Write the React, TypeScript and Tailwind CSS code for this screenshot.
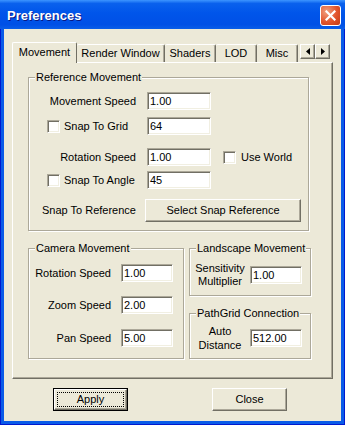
import type { ReactNode } from "react";

const sunken =
  "bg-white border border-[#aca899] border-r-white border-b-white shadow-[inset_1px_1px_0_#716f64,inset_-1px_-1px_0_#f1efe2]";
const raised =
  "bg-[#ece9d8] border border-white border-r-[#716f64] border-b-[#716f64] shadow-[inset_-1px_-1px_0_#aca899]";

const Edit = ({ value, w = "w-[64px]" }: { value: string; w?: string }) => (
  <div className={`${sunken} ${w} h-[18px] pl-[2px] leading-[16px]`}>{value}</div>
);

const Check = () => <div className={`${sunken} w-[13px] h-[13px] shrink-0`} />;

const Group = ({
  title,
  className,
  children,
}: {
  title: string;
  className: string;
  children: ReactNode;
}) => (
  <div
    className={`relative border border-[#aca899] shadow-[inset_1px_1px_0_#fff,1px_1px_0_#fff] ${className}`}
  >
    <span className="absolute -top-[7px] left-[6px] bg-[#ece9d8] px-[1px] leading-[13px] whitespace-nowrap">
      {title}
    </span>
    {children}
  </div>
);

const tabs = [
  { name: "Render Window", w: "w-[88px]" },
  { name: "Shaders", w: "w-[51px]" },
  { name: "LOD", w: "w-[41px]" },
  { name: "Misc", w: "w-[41px]" },
];

const Arrow = ({ dir }: { dir: "left" | "right" }) => (
  <div className={`${raised} w-[15px] h-[15px] flex items-center justify-center`}>
    <svg width="4" height="7" viewBox="0 0 4 7">
      {dir === "left" ? (
        <polygon points="4,0 4,7 0,3.5" fill="#000" />
      ) : (
        <polygon points="0,0 0,7 4,3.5" fill="#000" />
      )}
    </svg>
  </div>
);

export default function App() {
  return (
    <div className="w-[345px] h-[425px] flex flex-col bg-[#0a5be8] px-[4px] pb-[4px] shadow-[inset_1px_0_0_#0019cf,inset_-1px_0_0_#0019cf,inset_0_-1px_0_#0019cf] font-['Liberation_Sans',Arial,sans-serif] text-[11px] text-black select-none">
      {/* title bar */}
      <div className="-mx-[4px] h-[29px] pt-[2px] pl-[7px] pr-[4px] flex items-center justify-between bg-[linear-gradient(180deg,#3d95ff_0%,#0a61ed_12%,#0055ea_45%,#0050e6_85%,#0a5ee8_100%)]">
        <span className="text-white font-bold text-[13px] [text-shadow:1px_1px_0_#0a1883]">
          Preferences
        </span>
        <div className="w-[21px] h-[21px] rounded-[3px] border border-white bg-[radial-gradient(circle_at_30%_30%,#f0a080_0%,#e2542c_55%,#c23a14_100%)] flex items-center justify-center">
          <svg width="11" height="11" viewBox="0 0 11 11">
            <path d="M1.5 1.5 L9.5 9.5 M9.5 1.5 L1.5 9.5" stroke="#fff" strokeWidth="2.2" strokeLinecap="square" />
          </svg>
        </div>
      </div>

      {/* client area */}
      <div className="flex-1 bg-[#ece9d8] pl-[8px] pt-[13px] flex flex-col">
        {/* tab strip */}
        <div className="relative w-[321px] h-[20px] flex items-end">
          <div className="relative z-10 -mb-[1px] w-[65px] h-[21px] bg-[#ece9d8] border-l border-t border-white border-r border-r-[#716f64] rounded-t-[2px] flex items-center justify-center pb-[2px]">
            Movement
          </div>
          {tabs.map((t) => (
            <div
              key={t.name}
              className={`${t.w} h-[18px] bg-[#ece9d8] border-t border-white border-r border-r-[#716f64] shadow-[inset_-1px_0_0_#aca899] rounded-t-[2px] flex items-center justify-center whitespace-nowrap overflow-hidden`}
            >
              {t.name}
            </div>
          ))}
          <div className="absolute top-[2px] right-[3px] flex">
            <Arrow dir="left" />
            <Arrow dir="right" />
          </div>
        </div>

        {/* tab panel */}
        <div className="w-[321px] h-[317px] border border-white border-r-[#716f64] border-b-[#716f64] shadow-[inset_-1px_-1px_0_#aca899] pl-[15px] pt-[14px]">
          <Group title="Reference Movement" className="w-[281px] pb-[8px]">
            <div className="mt-[14px] h-[18px] flex items-center">
              <div className="w-[118px] pr-[11px] text-right">Movement Speed</div>
              <Edit value="1.00" />
            </div>
            <div className="mt-[7px] h-[18px] flex items-center">
              <div className="w-[118px] pl-[18px] flex items-center">
                <Check />
                <span className="ml-[4px]">Snap To Grid</span>
              </div>
              <Edit value="64" />
            </div>
            <div className="mt-[13px] h-[18px] flex items-center">
              <div className="w-[118px] pr-[11px] text-right">Rotation Speed</div>
              <Edit value="1.00" />
              <div className="ml-[12px] flex items-center">
                <Check />
                <span className="ml-[5px]">Use World</span>
              </div>
            </div>
            <div className="mt-[5px] h-[18px] flex items-center">
              <div className="w-[118px] pl-[18px] flex items-center">
                <Check />
                <span className="ml-[4px]">Snap To Angle</span>
              </div>
              <Edit value="45" />
            </div>
            <div className="mt-[10px] h-[23px] flex items-center">
              <div className="w-[116px] pl-[13px]">Snap To Reference</div>
              <div className={`${raised} w-[156px] h-[23px] flex items-center justify-center`}>
                Select Snap Reference
              </div>
            </div>
          </Group>

          <div className="mt-[17px] flex gap-[5px]">
            <Group title="Camera Movement" className="w-[156px] h-[111px]">
              <div className="mt-[15px] h-[18px] flex items-center">
                <div className="w-[92px] pr-[10px] text-right">Rotation Speed</div>
                <Edit value="1.00" w="w-[52px]" />
              </div>
              <div className="mt-[14px] h-[18px] flex items-center">
                <div className="w-[92px] pr-[10px] text-right">Zoom Speed</div>
                <Edit value="2.00" w="w-[52px]" />
              </div>
              <div className="mt-[15px] h-[18px] flex items-center">
                <div className="w-[92px] pr-[10px] text-right">Pan Speed</div>
                <Edit value="5.00" w="w-[52px]" />
              </div>
            </Group>

            <div className="w-[122px] flex flex-col gap-[17px]">
              <Group title="Landscape Movement" className="h-[48px]">
                <div className="mt-[13px] flex items-center">
                  <div className="w-[60px] text-center leading-[13px]">
                    Sensitivity
                    <br />
                    Multiplier
                  </div>
                  <Edit value="1.00" w="w-[52px]" />
                </div>
              </Group>
              <Group title="PathGrid Connection" className="h-[46px]">
                <div className="mt-[10px] flex items-center">
                  <div className="w-[60px] text-center leading-[14px]">
                    Auto
                    <br />
                    Distance
                  </div>
                  <Edit value="512.00" w="w-[52px]" />
                </div>
              </Group>
            </div>
          </div>
        </div>

        {/* dialog buttons */}
        <div className="mt-[9px] ml-[41px] flex gap-[84px]">
          <div className="w-[75px] h-[23px] border border-black">
            <div className={`${raised} relative w-full h-full flex items-center justify-center`}>
              <span className="absolute inset-[2px] border border-dotted border-black" />
              Apply
            </div>
          </div>
          <div className={`${raised} w-[75px] h-[23px] flex items-center justify-center`}>Close</div>
        </div>
      </div>
    </div>
  );
}
